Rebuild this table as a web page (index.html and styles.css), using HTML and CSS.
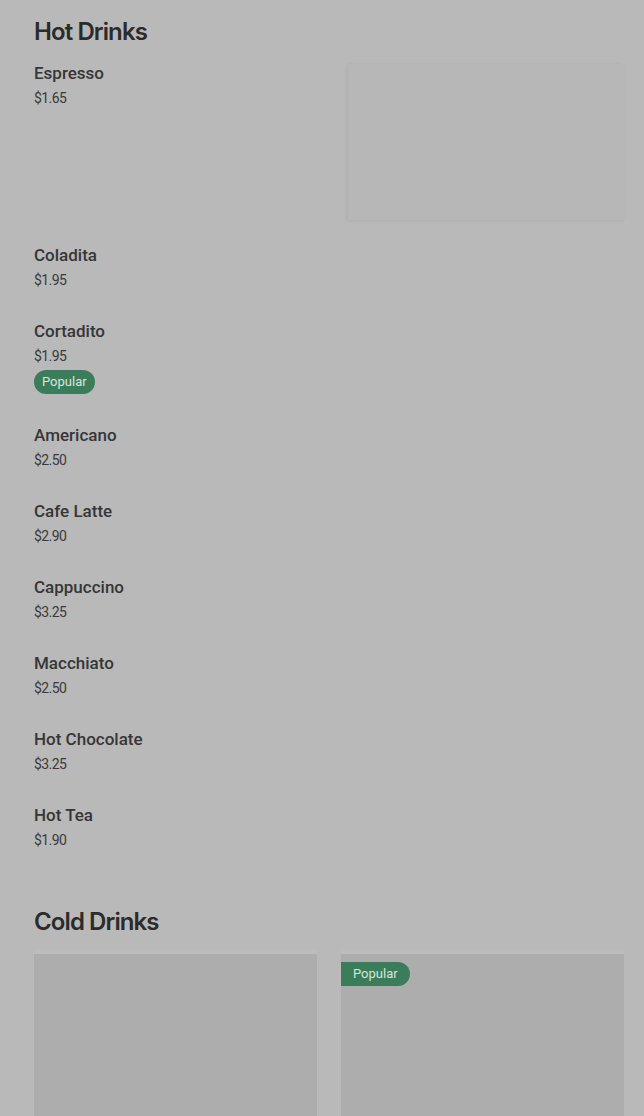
FILE: index.html
```html
<!DOCTYPE html>
<html>
<head>
<meta charset="utf-8">
<link rel="stylesheet" href="styles.css">
</head>
<body>
<main class="menu">
  <section class="section">
    <h2 class="section-title">Hot Drinks</h2>
    <ul class="list">
      <li class="item item-featured">
        <div class="item-text">
          <div class="item-name">Espresso</div>
          <div class="item-price">$1.65</div>
        </div>
        <div class="item-image"></div>
      </li>
      <li class="item"><div class="item-text"><div class="item-name">Coladita</div><div class="item-price">$1.95</div></div></li>
      <li class="item"><div class="item-text"><div class="item-name">Cortadito</div><div class="item-price">$1.95</div><span class="badge">Popular</span></div></li>
      <li class="item"><div class="item-text"><div class="item-name">Americano</div><div class="item-price">$2.50</div></div></li>
      <li class="item"><div class="item-text"><div class="item-name">Cafe Latte</div><div class="item-price">$2.90</div></div></li>
      <li class="item"><div class="item-text"><div class="item-name">Cappuccino</div><div class="item-price">$3.25</div></div></li>
      <li class="item"><div class="item-text"><div class="item-name">Macchiato</div><div class="item-price">$2.50</div></div></li>
      <li class="item"><div class="item-text"><div class="item-name">Hot Chocolate</div><div class="item-price">$3.25</div></div></li>
      <li class="item"><div class="item-text"><div class="item-name">Hot Tea</div><div class="item-price">$1.90</div></div></li>
    </ul>
  </section>
  <section class="section">
    <h2 class="section-title">Cold Drinks</h2>
    <div class="cards">
      <div class="card"></div>
      <div class="card"><span class="card-badge">Popular</span></div>
    </div>
  </section>
</main>
</body>
</html>
```
FILE: styles.css
```css
html, body {
  margin: 0;
  padding: 0;
  background: #b9b9b9;
}
body {
  font-family: Roboto, "Noto Sans", sans-serif;
  color: #2e2e2e;
}
.menu {
  padding: 15px 20px 0 34px;
}
.section-title {
  margin: 0 0 12px;
  font-family: Inter, "Noto Sans", sans-serif;
  font-size: 24px;
  line-height: 34px;
  font-weight: 600;
  letter-spacing: -0.9px;
  color: #2b2b2b;
}
.list {
  list-style: none;
  margin: 0;
  padding: 0;
}
.item {
  display: flex;
  justify-content: space-between;
  padding-bottom: 29px;
}
.item-featured {
  padding-bottom: 23px;
}
.item-name {
  font-size: 17px;
  line-height: 24px;
  font-weight: 500;
  color: #363636;
}
.item-price {
  margin-top: 3px;
  font-size: 14px;
  line-height: 20px;
  color: #3a3a3a;
  letter-spacing: -0.6px;
}
.item-image {
  margin-top: 3px;
  width: 276px;
  height: 156px;
  background: #b7b7b7;
  box-shadow: 0 1px 4px rgba(0,0,0,0.04), -2px 0 3px rgba(0,0,0,0.03);
}
.badge {
  display: inline-block;
  margin-top: 4px;
  padding: 0 8px;
  height: 24px;
  line-height: 24px;
  border-radius: 12px;
  background: #3b7d5b;
  color: #d6e6db;
  font-size: 13px;
}
.section + .section {
  margin-top: 26px;
}
.section + .section .section-title {
  margin-bottom: 15px;
}
.cards {
  display: grid;
  grid-template-columns: 1fr 1fr;
  gap: 24px;
}
.card {
  position: relative;
  height: 200px;
  background: #adadad;
  box-shadow: 0 -4px 2px rgba(255,255,255,0.05);
}
.card-badge {
  position: absolute;
  left: 0;
  top: 8px;
  height: 24px;
  line-height: 24px;
  padding: 0 12px;
  border-radius: 0 12px 12px 0;
  background: #3b7d5b;
  color: #d6e6db;
  font-size: 13px;
}
```
